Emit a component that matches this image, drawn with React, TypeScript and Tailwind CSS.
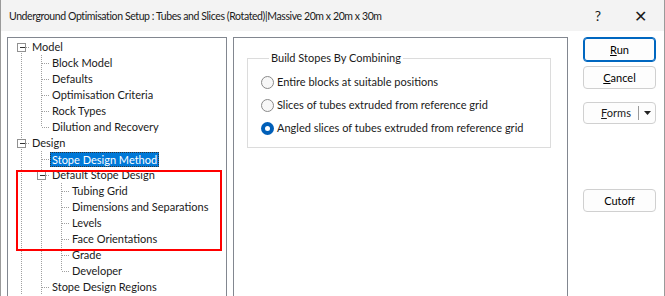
import React from 'react'

type Row = {
  label: string
  level: number
  guides: boolean[] // for each ancestor level, does a vertical line pass through
  first?: boolean
  hasNext: boolean
  expandable?: boolean
  selected?: boolean
}

const rows: Row[] = [
  { label: 'Model', level: 0, guides: [], first: true, hasNext: true, expandable: true },
  { label: 'Block Model', level: 1, guides: [true], hasNext: true },
  { label: 'Defaults', level: 1, guides: [true], hasNext: true },
  { label: 'Optimisation Criteria', level: 1, guides: [true], hasNext: true },
  { label: 'Rock Types', level: 1, guides: [true], hasNext: true },
  { label: 'Dilution and Recovery', level: 1, guides: [true], hasNext: false },
  { label: 'Design', level: 0, guides: [], hasNext: true, expandable: true },
  { label: 'Stope Design Method', level: 1, guides: [true], hasNext: true, selected: true },
  { label: 'Default Stope Design', level: 1, guides: [true], hasNext: true, expandable: true },
  { label: 'Tubing Grid', level: 2, guides: [true, true], hasNext: true },
  { label: 'Dimensions and Separations', level: 2, guides: [true, true], hasNext: true },
  { label: 'Levels', level: 2, guides: [true, true], hasNext: true },
  { label: 'Face Orientations', level: 2, guides: [true, true], hasNext: true },
  { label: 'Grade', level: 2, guides: [true, true], hasNext: true },
  { label: 'Developer', level: 2, guides: [true, true], hasNext: false },
  { label: 'Stope Design Regions', level: 1, guides: [true], hasNext: true },
]

const LINE = '#a0a0a0'

function TreeLines({ row }: { row: Row }) {
  const cx = (l: number) => 13 + 20 * l + 0.5
  const w = 22 + 20 * row.level
  const c = cx(row.level)
  return (
    <svg width={w} height={16} className="shrink-0" shapeRendering="crispEdges">
      {row.guides.map((g, i) =>
        g ? <line key={i} x1={cx(i)} y1={0} x2={cx(i)} y2={16} stroke={LINE} strokeDasharray="1 1" /> : null
      )}
      {!row.first && <line x1={c} y1={0} x2={c} y2={8} stroke={LINE} strokeDasharray="1 1" />}
      {row.hasNext && <line x1={c} y1={8} x2={c} y2={16} stroke={LINE} strokeDasharray="1 1" />}
      <line x1={c} y1={8.5} x2={w} y2={8.5} stroke={LINE} strokeDasharray="1 1" />
      {row.expandable && (
        <g>
          <rect x={c - 4} y={4.5} width={8} height={8} fill="#fff" stroke="#919191" />
          <line x1={c - 2} y1={8.5} x2={c + 3} y2={8.5} stroke="#333" />
        </g>
      )}
    </svg>
  )
}

function Button({ children, primary }: { children: React.ReactNode; primary?: boolean }) {
  return (
    <button
      className={
        primary
          ? 'h-[25px] w-[73px] rounded-[4px] border border-[#0067c0] bg-[#fdfdfd] text-[11px] text-black shadow-[inset_0_0_0_1px_#0067c0]'
          : 'h-[23px] w-[73px] rounded-[4px] border border-[#d0d0d0] bg-[#fdfdfd] text-[11px] text-black'
      }
    >
      {children}
    </button>
  )
}

function Radio({ label, checked }: { label: string; checked?: boolean }) {
  return (
    <div className="flex h-[16px] items-center gap-[3px] whitespace-nowrap">
      {checked ? (
        <span className="flex h-[13px] w-[13px] shrink-0 items-center justify-center rounded-full bg-[#005fb8]">
          <span className="h-[5px] w-[5px] rounded-full bg-white" />
        </span>
      ) : (
        <span className="h-[13px] w-[13px] shrink-0 rounded-full border border-[#8a8a8a] bg-[#f7f7f7]" />
      )}
      <span>{label}</span>
    </div>
  )
}

export default function App() {
  return (
    <div
      className="relative h-[296px] w-[665px] overflow-hidden border-x border-[#9a9a9a] bg-white text-[11px] leading-[16px] text-[#1a1a1a]"
      style={{ fontFamily: 'Lato, "Segoe UI", sans-serif' }}
    >
      {/* title bar */}
      <div className="flex h-[31px] items-center bg-[#f3f3f3] pl-[8px]">
        <span className="flex-1 text-[10.5px] tracking-[-0.4px]">
          Underground Optimisation Setup : Tubes and Slices (Rotated)|Massive 20m x 20m x 30m
        </span>
        <span className="w-[20px] text-center text-[14px]">?</span>
        <span className="ml-[22px] mr-[14px] w-[20px] text-center text-[16px] font-light">✕</span>
      </div>

      <div className="flex pl-[6px] pt-[6px]">
        {/* tree */}
        <div className="h-[300px] w-[220px] shrink-0 border border-[#828790] pt-[1px]">
          {rows.map((r) => (
            <div key={r.label} className="flex h-[16px] items-center whitespace-nowrap">
              <TreeLines row={r} />
              {r.selected ? (
                <span className="h-[15px] border border-dotted border-[#333] bg-[#0078d7] px-[1px] leading-[13px] text-white">
                  {r.label}
                </span>
              ) : (
                <span className="px-[2px]">{r.label}</span>
              )}
            </div>
          ))}
        </div>

        {/* settings panel */}
        <div className="ml-[6px] h-[300px] w-[335px] shrink-0 border border-[#828790] pl-[13px] pt-[12px]">
          <fieldset className="h-[98px] w-[304px] border border-[#dcdcdc] pl-[13px]">
            <legend className="ml-[8px] px-[2px]">Build Stopes By Combining</legend>
            <div className="flex flex-col gap-[7px] pt-[8px]">
              <Radio label="Entire blocks at suitable positions" />
              <Radio label="Slices of tubes extruded from reference grid" />
              <Radio label="Angled slices of tubes extruded from reference grid" checked />
            </div>
          </fieldset>
        </div>

        {/* buttons */}
        <div className="ml-[15px] flex flex-col">
          <Button primary>
            <span className="underline">R</span>un
          </Button>
          <div className="mt-[4px]">
            <Button>
              <span className="underline">C</span>ancel
            </Button>
          </div>
          <div className="mt-[13px]">
            <button className="flex h-[22px] w-[73px] items-center rounded-[4px] border border-[#d0d0d0] bg-[#fdfdfd] text-[11px]">
              <span className="flex-1 pl-[10px] text-center">
                <span className="underline">F</span>orms
              </span>
              <span className="h-[14px] w-px bg-[#9a9a9a]" />
              <span className="flex w-[16px] justify-center">
                <svg width="7" height="4" viewBox="0 0 7 4">
                  <path d="M0 0h7L3.5 4z" fill="#222" />
                </svg>
              </span>
            </button>
          </div>
          <div className="mt-[65px]">
            <Button>Cutoff</Button>
          </div>
        </div>
      </div>

      {/* annotation highlight */}
      <div className="absolute left-[15px] top-[170px] h-[81px] w-[206px] border-2 border-[#ff0000]" />
    </div>
  )
}
